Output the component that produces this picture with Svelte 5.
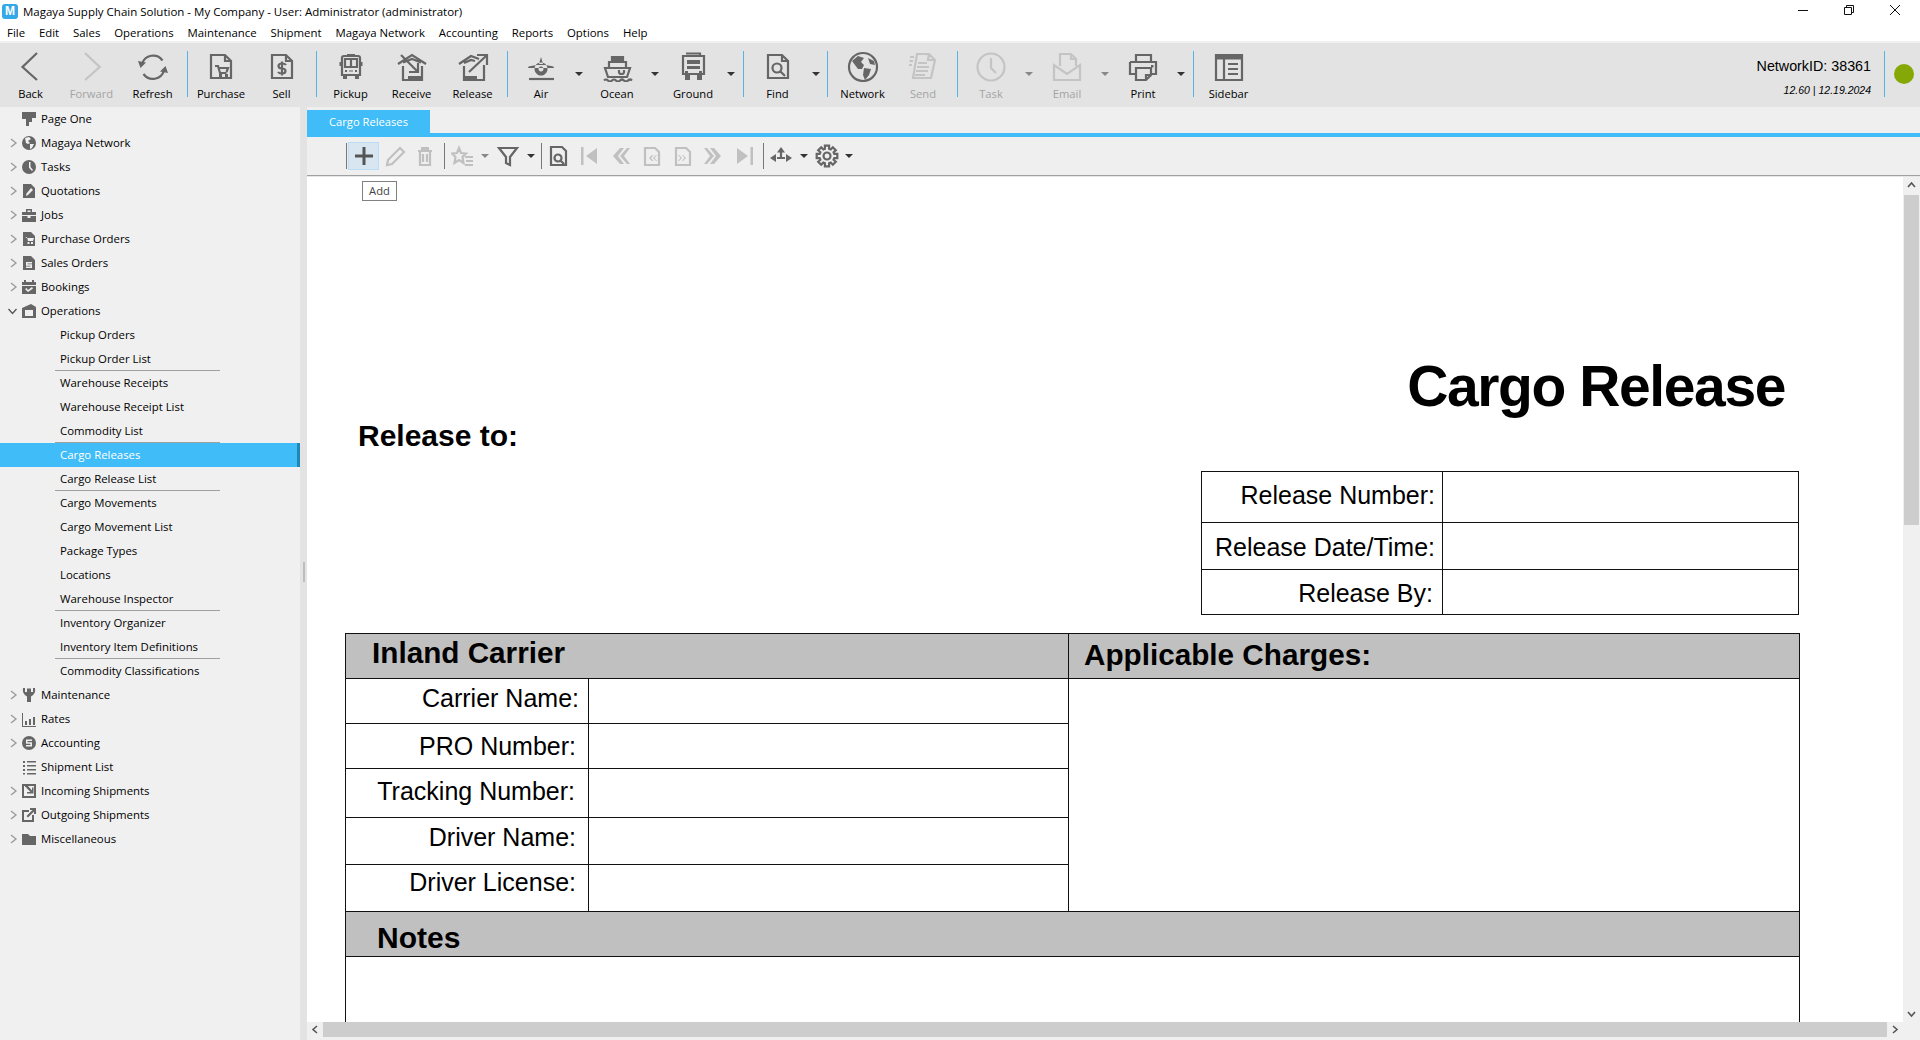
<script>
  const doc = 'M6 5H20L26 11V28H6ZM20 5V11H26';
  const gear = (() => {
    let d = '';
    const n = 8;
    for (let i = 0; i < n; i++) {
      const a = (i * 2 * Math.PI) / n;
      const pts = [[-0.28, 7.6], [-0.2, 10.5], [0.2, 10.5], [0.28, 7.6]];
      for (const [o, r] of pts) {
        d += (d ? 'L' : 'M') + (12 + r * Math.sin(a + o)).toFixed(1) + ' ' + (12 - r * Math.cos(a + o)).toFixed(1);
      }
    }
    return d + 'ZM15.5 12a3.5 3.5 0 1 1-7 0a3.5 3.5 0 1 1 7 0Z';
  })();

  const big = {
    back: { s: 'M22 3L7.5 17L22 30' },
    forward: { s: 'M9 3L23.7 17L9 30' },
    refresh: { s: 'M5 14A11.5 11.5 0 0 1 25.5 10.5M27 20.5A11.5 11.5 0 0 1 6.5 24', f: 'M1 11L9 12.5L3.5 18ZM31 23L23 21.5L28.5 16Z' },
    purchase: { s: doc + 'M10 16H13L15 23H21.5M14 18H23L21.5 22', f: 'M14 24h3v3h-3zM20 24h3v3h-3z' },
    sell: { s: doc + 'M20 15Q19 13.5 16 13.5Q12.5 13.5 12.5 16Q12.5 18.5 16 18.5Q19.5 18.5 19.5 21Q19.5 23.5 16 23.5Q13 23.5 12 22M16 11.5V25.5' },
    pickup: { s: 'M9 6H23Q25 6 25 8V25H7V8Q7 6 9 6ZM10 9H22V17H10ZM16 9V17', f: 'M4.5 12h2v4h-2zM25.5 12h2v4h-2zM8 25h4v4H8zM20 25h4v4h-4zM10 20h2v2h-2zM20 20h2v2h-2zM14 20.5h4v1h-4zM12 4h8v2h-8z' },
    receive: { s: 'M2 14L16 5L30 14M7 12.5L16 9L25 12.5M7 16V30H26V16M5 5L21 21M13 22H22V13', f: 'M12 26H26V30H12Z' },
    release: { s: 'M2 14L14 6L22 9M7 13L14 10L18 11M7 16V30H27V15M12 22L29 6M20 5H30V15', f: 'M7 26H20V30H7Z' },
    air: { s: 'M4 29H29', f: 'M16 7L18 14H14ZM3 18Q3 16 6 16L12 15H20L26 16Q29 16 29 18L21 18H11ZM16 12.5a6.5 6.5 0 1 0 .01 0ZM16 16.5a2.5 2.5 0 1 1-.01 0Z' },
    ocean: { s: 'M4 18H29L26 27H7ZM8 17V12H25V17M11 12V7H22V12M18 20V22Q18 24 20.5 24Q23 24 23 22V20M3 30.5Q5 28.5 7 30.5T11 30.5T15 30.5T19 30.5T23 30.5T27 30.5T31 30.5', f: 'M11 8h11v3H11z' },
    ground: { s: 'M6 6H27V24H6ZM23 6V3.5H9', f: 'M10 10H23V14H10ZM10 16H23V19H10ZM8 24H13V30H8ZM20 24H25V30H20ZM8 21H11V23H8ZM22 21H25V23H22Z' },
    find: { s: doc + 'M19.5 18a4.5 4.5 0 1 1-9 0a4.5 4.5 0 1 1 9 0ZM18.5 21.5L23 26' },
    network: { s: 'M30 17A14 14 0 1 1 2 17A14 14 0 1 1 30 17Z', f: 'M5 11L11 6L17 8L14 12L17 15L15 19L11 19L8 15ZM17 18L24 19L22 25L18 30L16 25ZM21 8L27 11L28 15L23 14Z' },
    send: { s: 'M10 4H22L28 10L24 28H6ZM22 4L21 10H28M11 13H20M10 17H22M9 21H21M8 25H18M3 7H7M2.5 11H6M2 15H5' },
    task: { s: 'M29.5 17A13.5 13.5 0 1 1 2.5 17A13.5 13.5 0 1 1 29.5 17ZM16 8V18L21 23' },
    email: { s: 'M3 15V30H29V15L16 24ZM9 16V4H20L25 9V16M20 4V9H25' },
    print: { s: 'M9 12V5H24V12M3 12H29V24H24M3 12V24H9M9 18H24V25L19 30H9ZM19 30V25H24', f: 'M24 15h2.5v2.5H24z' },
    sidebar: { s: 'M3 5H29V30H3ZM11 9V30M15 14H25M15 19H25M15 24H25', f: 'M3 5H29V9.5H3Z' }
  };

  const tools = [
    { t: 'Back', i: 'back', w: 61 }, { t: 'Forward', i: 'forward', w: 61, off: true }, { t: 'Refresh', i: 'refresh', w: 61 },
    { sep: 1, w: 8 },
    { t: 'Purchase', i: 'purchase', w: 60 }, { t: 'Sell', i: 'sell', w: 61 },
    { sep: 1, w: 8 },
    { t: 'Pickup', i: 'pickup', w: 61 }, { t: 'Receive', i: 'receive', w: 61 }, { t: 'Release', i: 'release', w: 61 },
    { sep: 1, w: 8 },
    { t: 'Air', i: 'air', w: 60 }, { arrow: 1, w: 16 }, { t: 'Ocean', i: 'ocean', w: 60 }, { arrow: 1, w: 16 },
    { t: 'Ground', i: 'ground', w: 60 }, { arrow: 1, w: 16 },
    { sep: 1, w: 8 },
    { t: 'Find', i: 'find', w: 61 }, { arrow: 1, w: 15 },
    { sep: 1, w: 9 },
    { t: 'Network', i: 'network', w: 61 }, { t: 'Send', i: 'send', w: 60, off: true },
    { sep: 1, w: 8 },
    { t: 'Task', i: 'task', w: 60, off: true }, { arrow: 1, w: 16, off: true },
    { t: 'Email', i: 'email', w: 60, off: true }, { arrow: 1, w: 16, off: true },
    { t: 'Print', i: 'print', w: 60 }, { arrow: 1, w: 16 },
    { sep: 1, w: 9 },
    { t: 'Sidebar', i: 'sidebar', w: 61 }
  ];

  const sub = [
    { sep: 1, w: 3 },
    { i: { s: 'M12 3V21M3 12H21' }, w: 31, hot: true },
    { i: { s: 'M5 16L17 4L21 8L9 20L4 21Z' }, w: 31, off: true },
    { i: { s: 'M5 7H19M7 7V21H17V7M10 10V18M14 10V18', f: 'M8 3H16V6H8Z' }, w: 30, off: true },
    { sep: 1, w: 8 },
    { i: { s: 'M8 4L10 9L15 9.5L11.5 13L12.5 19L8 16L3.5 19L4.5 13L1 9.5L6 9ZM14 13H22M15 17H22M14 21H22' }, w: 29, off: true },
    { arrow: 1, w: 15, off: true },
    { i: { s: 'M3 4H21L14 13V21L10 19V13Z' }, w: 31 },
    { arrow: 1, w: 15 },
    { sep: 1, w: 6 },
    { i: { s: 'M5 3H16L20 7V21H5ZM15.5 14a3.5 3.5 0 1 1-7 0a3.5 3.5 0 1 1 7 0ZM14.5 16.5L18 20' }, w: 27 },
    { gap: 1, w: 3 },
    { i: { f: 'M4 3h2.5v18H4zM20 4V20L9 12Z' }, w: 30, off: true },
    { i: { f: 'M12 4h4l-6 8 6 8h-4l-7-8zM19 4h3l-6 8 6 8h-3l-7-8z' }, w: 32, off: true },
    { i: { s: 'M5 4H15L19 8V21H5Z', f: 'M12 11l-3 3 3 3h1.5l-2.5-3 2.5-3zM16 11l-3 3 3 3h1l-2.5-3 2.5-3z' }, w: 31, off: true },
    { i: { s: 'M5 4H15L19 8V21H5Z', f: 'M8 11l3 3-3 3H7l2.5-3L7 11zM12 11l3 3-3 3h-1l2.5-3-2.5-3z' }, w: 31, off: true },
    { i: { f: 'M12 4H8l6 8-6 8h4l7-8zM5 4H2l6 8-6 8h3l7-8z' }, w: 31, off: true },
    { i: { f: 'M17.5 3H20v18h-2.5zM4 4V20L15 12Z' }, w: 31, off: true },
    { sep: 1, w: 6 },
    { i: { s: 'M8 14H16M12 14V8', f: 'M12 3L16 8.5H8ZM1 14L7 10V18ZM23 14L17 10V18Z' }, w: 30 },
    { arrow: 1, w: 15 },
    { i: { s: gear }, w: 31 },
    { arrow: 1, w: 14 }
  ];

  const mini = {
    page: { f: 'M1 1H15V7H11V11H8V15H5V8H1Z' },
    globe: { f: 'M15 8A7 7 0 1 1 1 8A7 7 0 1 1 15 8Z', w: 'M4 3L8 2L10 4L7 6L9 8L7 9L5 8ZM9 9L13 9L11 13L9 14Z' },
    tasks: { f: 'M15 8A7 7 0 1 1 1 8A7 7 0 1 1 15 8Z', w: 'M8 3H9.5V8L12 11L11 12L8 8.8Z' },
    quote: { f: 'M2 1H10L14 5V15H2Z', w: 'M10 5L12 7L7 12L5 13L5.5 10.5Z' },
    jobs: { f: 'M1 5H15V8H1ZM1 9H6.5V11H9.5V9H15V15H1ZM5 2H11V5H9.5V3.5H6.5V5H5Z' },
    purchase: { f: 'M2 1H10L14 5V15H2Z', w: 'M4 6H6L7 10H12L13 7H6.5M6.5 11h2v2h-2zM10 11h2v2h-2z' },
    sales: { f: 'M2 1H10L14 5V15H2Z', w: 'M5 7H11V8.5H6.5V9.2H11V13H5V11.5H9.5V10.8H5Z' },
    bookings: { f: 'M1 3H15V6H1ZM3 1H5V3H3ZM11 1H13V3H11ZM1 7H15V15H1Z', w: 'M4 10L5.5 9L7 11L11 8L12 9.5L7 13Z' },
    ops: { f: 'M1 5L10 1L15 4V15H1Z', w: 'M4 7H12V13H4Z' },
    maint: { f: 'M2 1L4 1V5H6V1.5H10V5H12V1H14Q15 7 10 9.5V15H6V9.5Q1 7 2 1Z' },
    rates: { f: 'M1 2H2V15H15V16H1ZM4 10H6V14H4ZM8 8H10V14H8ZM12 6H14V14H12Z' },
    acct: { f: 'M15 8A7 7 0 1 1 1 8A7 7 0 1 1 15 8Z', w: 'M5 4.5H11V6H6.5V7.2H11V11.5H5V10H9.5V8.8H5Z' },
    list: { f: 'M2 2h2v2H2zM6 2h9v1.5H6zM2 6h2v2H2zM6 6h9v1.5H6zM2 10h2v2H2zM6 10h9v1.5H6zM2 14h2v1.5H2zM6 14h9v1.5H6z' },
    inbox: { f: 'M1 1H15V15H1ZM3 3V13H13V3ZM4 2H7V4H4ZM5 4.5L7 3L11 7.5V4.5H12.5V10.5H6V9H9.5Z' },
    outbox: { f: 'M1 3H8V5H3V13H11V8H13V15H1ZM9 1H15V7H13V4.5L7 10.5L5.5 9L11.5 3H9Z' },
    misc: { f: 'M1 3H7L9 5H15V14H1Z' }
  };

  const nav = [
    { t: 'Page One', i: 'page' },
    { t: 'Magaya Network', i: 'globe', c: 1 },
    { t: 'Tasks', i: 'tasks', c: 1 },
    { t: 'Quotations', i: 'quote', c: 1 },
    { t: 'Jobs', i: 'jobs', c: 1 },
    { t: 'Purchase Orders', i: 'purchase', c: 1 },
    { t: 'Sales Orders', i: 'sales', c: 1 },
    { t: 'Bookings', i: 'bookings', c: 1 },
    { t: 'Operations', i: 'ops', open: 1 },
    { t: 'Pickup Orders' },
    { t: 'Pickup Order List', line: 1 },
    { t: 'Warehouse Receipts' },
    { t: 'Warehouse Receipt List' },
    { t: 'Commodity List', line: 1 },
    { t: 'Cargo Releases', sel: 1 },
    { t: 'Cargo Release List', line: 1 },
    { t: 'Cargo Movements' },
    { t: 'Cargo Movement List' },
    { t: 'Package Types' },
    { t: 'Locations' },
    { t: 'Warehouse Inspector', line: 1 },
    { t: 'Inventory Organizer' },
    { t: 'Inventory Item Definitions', line: 1 },
    { t: 'Commodity Classifications' },
    { t: 'Maintenance', i: 'maint', c: 1 },
    { t: 'Rates', i: 'rates', c: 1 },
    { t: 'Accounting', i: 'acct', c: 1 },
    { t: 'Shipment List', i: 'list' },
    { t: 'Incoming Shipments', i: 'inbox', c: 1 },
    { t: 'Outgoing Shipments', i: 'outbox', c: 1 },
    { t: 'Miscellaneous', i: 'misc', c: 1 }
  ];

  const menu = ['File', 'Edit', 'Sales', 'Operations', 'Maintenance', 'Shipment', 'Magaya Network', 'Accounting', 'Reports', 'Options', 'Help'];

  const release = [
    { l: 'Release Number:', h: 51, b: 18, r: 7 },
    { l: 'Release Date/Time:', h: 47, b: 13, r: 7 },
    { l: 'Release By:', h: 45, b: 12, r: 9 }
  ];
  const carrier = [
    { l: 'Carrier Name:', h: 45, b: 16, r: 9 },
    { l: 'PRO Number:', h: 45, b: 13, r: 12 },
    { l: 'Tracking Number:', h: 49, b: 17, r: 13 },
    { l: 'Driver Name:', h: 47, b: 18, r: 12 },
    { l: 'Driver License:', h: 47, b: 20, r: 12 }
  ];
</script>

{#snippet ico(i, size, box)}
  <svg width={size} height={size} viewBox="0 0 {box} {box}" aria-hidden="true">
    {#if i.f}<path class="f" d={i.f} />{/if}
    {#if i.w}<path class="w" d={i.w} />{/if}
    {#if i.s}<path class="s" d={i.s} />{/if}
  </svg>
{/snippet}

<div class="app">
  <header class="title">
    <span class="logo">M</span>
    <span class="title-text">Magaya Supply Chain Solution - My Company - User: Administrator (administrator)</span>
    <div class="win">
      <svg width="12" height="12" viewBox="0 0 12 12"><path d="M1 6.5H11" /></svg>
      <svg width="12" height="12" viewBox="0 0 12 12"><path d="M1.5 3.5H8.5V10.5H1.5ZM3.5 3.5V1.5H10.5V8.5H8.5" /></svg>
      <svg width="12" height="12" viewBox="0 0 12 12"><path d="M1 1L11 11M11 1L1 11" /></svg>
    </div>
  </header>

  <nav class="menu">
    {#each menu as m}<span>{m}</span>{/each}
  </nav>

  <div class="toolbar">
    {#each tools as b}
      {#if b.sep}
        <div class="sep-wrap" style="width:{b.w}px"><i class="sep"></i></div>
      {:else if b.arrow}
        <div class="arrow-wrap" class:off={b.off} style="width:{b.w}px"><i class="tri"></i></div>
      {:else}
        <div class="tool" class:off={b.off} style="width:{b.w}px">
          {@render ico(big[b.i], 32, 32)}
          <span>{b.t}</span>
        </div>
      {/if}
    {/each}
    <div class="status">
      <div class="status-text">
        <div class="nid">NetworkID: 38361</div>
        <div class="ver">12.60 | 12.19.2024</div>
      </div>
      <i class="sep"></i>
      <i class="dot"></i>
    </div>
  </div>

  <div class="main">
    <aside class="side">
      {#each nav as n}
        <div class="row" class:child={!n.i} class:sel={n.sel} class:lined={n.line}>
          {#if n.c}
            <svg class="chev" width="9" height="12" viewBox="0 0 9 12"><path d="M2 2L7 6L2 10" /></svg>
          {:else if n.open}
            <svg class="chev open" width="11" height="9" viewBox="0 0 11 9"><path d="M1.5 2L5.5 6.5L9.5 2" /></svg>
          {/if}
          {#if n.i}
            <span class="mini">{@render ico(mini[n.i], 16, 16)}</span>
          {/if}
          <span class="row-text">{n.t}</span>
        </div>
      {/each}
    </aside>
    <div class="split"><i></i></div>
    <section class="content">
      <div class="tabs"><div class="tab">Cargo Releases</div></div>
      <div class="subbar">
        {#each sub as b}
          {#if b.sep}
            <div class="sub-sep" style="width:{b.w}px"><i></i></div>
          {:else if b.gap}
            <div style="width:{b.w}px"></div>
          {:else if b.arrow}
            <div class="arrow-wrap small" class:off={b.off} style="width:{b.w}px"><i class="tri"></i></div>
          {:else}
            <div class="sub-btn" class:off={b.off} class:hot={b.hot} style="width:{b.w}px">
              {@render ico(b.i, 24, 24)}
            </div>
          {/if}
        {/each}
        <div class="tip">Add</div>
      </div>
      <div class="view">
        <div class="doc-col">
          <div class="doc">
            <h1>Cargo Release</h1>
            <h2>Release to:</h2>
            <div class="t1">
              {#each release as r}
                <div class="t-row" style="height:{r.h}px">
                  <div class="lab lab1" style="padding-bottom:{r.b - 6}px;padding-right:{r.r}px">{r.l}</div>
                </div>
              {/each}
            </div>
            <div class="t2">
              <div class="t2-main">
                <div class="t2-left">
                  <div class="hd hd-in">Inland Carrier</div>
                  {#each carrier as r}
                    <div class="t-row" style="height:{r.h}px">
                      <div class="lab lab2" style="padding-bottom:{r.b - 6}px;padding-right:{r.r}px">{r.l}</div>
                    </div>
                  {/each}
                </div>
                <div class="t2-right">
                  <div class="hd hd-ap">Applicable Charges:</div>
                </div>
              </div>
              <div class="hd hd-no">Notes</div>
              <div class="notes"></div>
            </div>
          </div>
          <div class="hbar">
            <svg width="16" height="15" viewBox="0 0 16 15"><path d="M10 4L6 7.5L10 11" /></svg>
            <i class="hthumb"></i>
            <svg width="16" height="15" viewBox="0 0 16 15"><path d="M6 4L10 7.5L6 11" /></svg>
          </div>
        </div>
        <div class="vbar">
          <svg width="17" height="16" viewBox="0 0 17 16"><path d="M5 10L8.5 6L12 10" /></svg>
          <i class="vthumb"></i>
          <svg class="vdown" width="17" height="16" viewBox="0 0 17 16"><path d="M5 6L8.5 10L12 6" /></svg>
        </div>
      </div>
    </section>
  </div>
</div>

<style>
  :global(body) { margin: 0; background: #f0f0f0; }
  .app {
    width: 1920px; height: 1040px; display: flex; flex-direction: column; overflow: hidden;
    font-family: "Open Sans", "Noto Sans", sans-serif; font-size: 11.2px; color: #000; background: #f0f0f0;
  }
  i { display: block; font-style: normal; }
  svg { display: block; flex: none; }
  .f { fill: currentColor; }
  .w { fill: #f0f0f0; }
  .s { fill: none; stroke: currentColor; stroke-width: 2.2; }

  .title { height: 22px; background: #fff; display: flex; align-items: center; padding-left: 2px; flex: none; position: relative; }
  .logo {
    width: 16px; height: 15px; border-radius: 3px; background: #35a8e8; color: #fff; font: bold 12px/15px "Liberation Sans", sans-serif;
    text-align: center; margin-right: 5px;
  }
  .title-text { font-size: 11.5px; }
  .win { margin-left: auto; display: flex; gap: 34px; padding: 0 19px 2px 0; align-items: center; }
  .win path { fill: none; stroke: #111; stroke-width: 1; }

  .menu { height: 21px; box-sizing: border-box; padding: 2px 0 0 7px; background: #fff; display: flex; gap: 13.9px; align-items: center; flex: none; border-bottom: 2px solid #f0f0f0; font-size: 11.4px; }

  .toolbar { height: 64px; background: #e3e3e3; display: flex; flex: none; }
  .tool { display: flex; flex-direction: column; align-items: center; color: #666; flex: none; padding-top: 7px; box-sizing: border-box; }
  .tool span { color: #000; margin-top: 4px; line-height: 16px; white-space: nowrap; }
  .tool.off { color: #c4c4c4; }
  .tool.off span { color: #a3a3a3; }
  .sep-wrap { display: flex; justify-content: center; flex: none; }
  .sep { width: 1px; height: 46px; margin-top: 8px; background: #55b4e4; flex: none; }
  .arrow-wrap { display: flex; justify-content: center; padding-top: 29px; box-sizing: border-box; flex: none; color: #333; }
  .arrow-wrap.small { padding-top: 17px; }
  .arrow-wrap.off { color: #888; }
  .tri { width: 0; height: 0; border-left: 4px solid transparent; border-right: 4px solid transparent; border-top: 4px solid currentColor; }

  .status { margin-left: auto; display: flex; flex: none; padding-right: 6px; }
  .status-text { font-family: "Liberation Sans", sans-serif; text-align: right; padding-top: 15px; margin-right: 13px; }
  .nid { font-size: 14.3px; line-height: 17px; }
  .ver { font-size: 10.5px; font-style: italic; line-height: 13px; margin-top: 9px; }
  .dot { width: 20px; height: 20px; border-radius: 50%; background: #86a806; margin: 21px 0 0 9px; }

  .main { flex: 1; display: flex; min-height: 0; }
  .side { width: 300px; flex: none; background: #f0f0f0; font-size: 11.4px; }
  .row { height: 24px; display: flex; align-items: center; position: relative; box-sizing: border-box; }
  .row-text { position: absolute; left: 41px; white-space: nowrap; line-height: 24px; }
  .row.child .row-text { left: 60px; }
  .chev { position: absolute; left: 9px; top: 6px; }
  .chev path { fill: none; stroke: #999; stroke-width: 1.3; }
  .chev.open { left: 7px; top: 8px; }
  .chev.open path { stroke: #555; }
  .mini { position: absolute; left: 21px; top: 4px; color: #666; }
  .row.sel { background: #40bcf8; border-right: 3px solid #1f88b8; color: #fff; }
  .row.lined::after { content: ""; position: absolute; left: 55px; width: 165px; bottom: 0; height: 1px; background: #a0a0a0; }

  .split { width: 7px; flex: none; background: #e3e3e3; position: relative; display: flex; align-items: center; }
  .split i { width: 2px; height: 20px; margin: 0 0 0 3px; background: #bdbdbd; position: absolute; top: 455px; }

  .content { flex: 1; min-width: 0; display: flex; flex-direction: column; }
  .tabs { height: 26px; background: #efefef; display: flex; align-items: flex-end; flex: none; border-bottom: 4px solid #40bcf8; }
  .tab { width: 123px; height: 23px; background: #40bcf8; color: #fff; text-align: center; line-height: 23px; }
  .subbar { height: 38px; background: #efefef; border-bottom: 1px solid #a0a0a0; display: flex; padding-left: 38px; position: relative; flex: none; }
  .sub-btn { height: 28px; margin-top: 5px; display: flex; align-items: center; justify-content: center; color: #666; box-sizing: border-box; flex: none; }
  .sub-btn.off { color: #c0c0c0; }
  .sub-btn.hot { background: #d8e6f2; border: 1px solid #bcdcf4; color: #555; }
  .sub-btn.hot .s { stroke-width: 3; }
  .sub-sep { flex: none; display: flex; justify-content: center; }
  .sub-sep i { width: 1px; height: 26px; margin-top: 6px; background: #777; }
  .tip {
    position: absolute; left: 55px; top: 44px; width: 35px; height: 20px; box-sizing: border-box; background: #fff;
    border: 1px solid #808080; color: #444; text-align: center; line-height: 18px; z-index: 2;
  }

  .view { flex: 1; min-height: 0; display: flex; border-top: 1px solid #e6e6e6; }
  .doc-col { flex: 1; min-width: 0; display: flex; flex-direction: column; }
  .doc { flex: 1; min-height: 0; overflow: hidden; background: #fff; font-family: "Liberation Sans", sans-serif; color: #000; }
  h1 { margin: 176px 0 0; padding-right: 118px; text-align: right; font-size: 57px; letter-spacing: -1.4px; line-height: 66px; font-weight: 700; }
  h2 { margin: -1px 0 0 51px; font-size: 30px; line-height: 36px; font-weight: 700; }
  .t1 { margin: 17px 0 0 894px; width: 598px; box-sizing: border-box; border: 1px solid #111; border-bottom: 0; }
  .t-row { box-sizing: border-box; display: flex; border-bottom: 1px solid #111; }
  .lab { box-sizing: border-box; flex: none; text-align: right; align-self: flex-end; font-size: 25px; line-height: 30px; white-space: nowrap; height: 100%; display: flex; align-items: flex-end; justify-content: flex-end; }
  .lab1 { width: 241px; border-right: 1px solid #111; }
  .lab2 { width: 243px; border-right: 1px solid #111; }
  .t2 { margin: 18px 0 0 38px; width: 1455px; box-sizing: border-box; border: 1px solid #111; border-bottom: 0; }
  .t2-main { display: flex; }
  .t2-left { width: 723px; flex: none; box-sizing: border-box; border-right: 1px solid #111; }
  .t2-right { flex: 1; border-bottom: 1px solid #111; }
  .hd { background: #c0c0c0; font-weight: 700; font-size: 29.7px; line-height: 36px; border-bottom: 1px solid #111; box-sizing: border-box; height: 45px; }
  .hd-in { padding: 1px 0 0 26px; }
  .hd-ap { padding: 3px 0 0 15px; }
  .hd-no { padding: 8px 0 0 31px; font-size: 30px; }
  .notes { height: 200px; }

  .hbar { height: 18px; box-sizing: border-box; background: #f0f0f0; display: flex; align-items: center; padding-bottom: 3px; flex: none; }
  .hbar path, .vbar path { fill: none; stroke: #555; stroke-width: 1.6; }
  .hthumb { flex: 1; height: 15px; background: #cdcdcd; }
  .vbar { width: 17px; flex: none; background: #f0f0f0; display: flex; flex-direction: column; }
  .vthumb { width: 15px; height: 330px; margin: 2px 1px 0; background: #cdcdcd; }
  .vdown { margin-top: auto; margin-bottom: 18px; }
</style>
